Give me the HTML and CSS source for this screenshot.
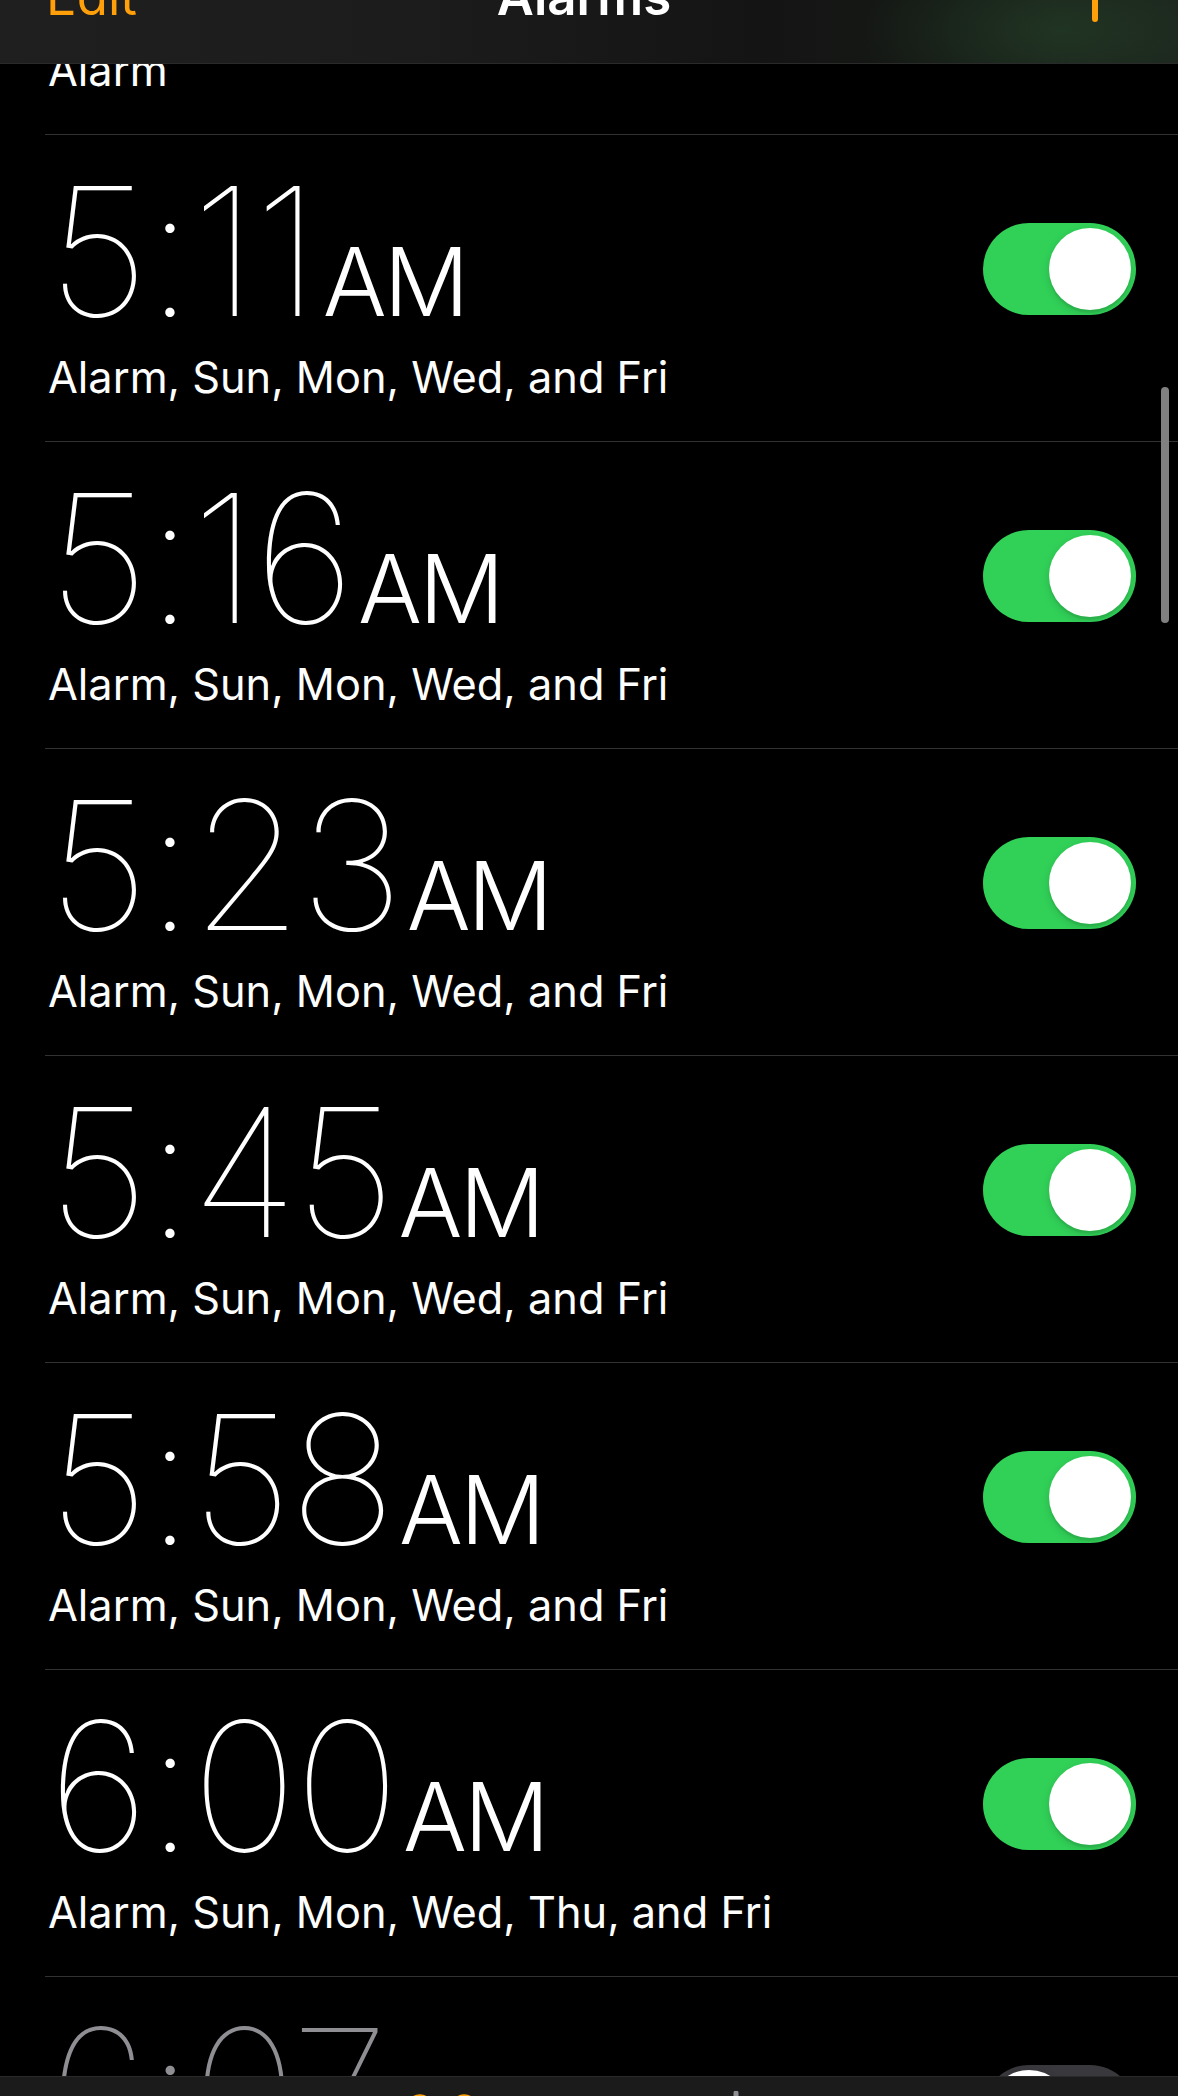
FILE: index.html
```html
<!DOCTYPE html>
<html lang="en">
<head>
<meta charset="utf-8">
<title>Alarms</title>
<link rel="stylesheet" href="styles.css">
</head>
<body>
<main class="list">
  <div class="row">
    <div class="info">
      <div class="time">4:50<span class="ampm">AM</span></div>
      <div class="sub">Alarm</div>
    </div>
    <span class="switch on"><span class="knob"></span></span>
  </div>
  <div class="row">
    <div class="info">
      <div class="time">5:11<span class="ampm">AM</span></div>
      <div class="sub">Alarm, Sun, Mon, Wed, and Fri</div>
    </div>
    <span class="switch on"><span class="knob"></span></span>
  </div>
  <div class="row">
    <div class="info">
      <div class="time">5:16<span class="ampm">AM</span></div>
      <div class="sub">Alarm, Sun, Mon, Wed, and Fri</div>
    </div>
    <span class="switch on"><span class="knob"></span></span>
  </div>
  <div class="row">
    <div class="info">
      <div class="time">5:23<span class="ampm">AM</span></div>
      <div class="sub">Alarm, Sun, Mon, Wed, and Fri</div>
    </div>
    <span class="switch on"><span class="knob"></span></span>
  </div>
  <div class="row">
    <div class="info">
      <div class="time">5:45<span class="ampm">AM</span></div>
      <div class="sub">Alarm, Sun, Mon, Wed, and Fri</div>
    </div>
    <span class="switch on"><span class="knob"></span></span>
  </div>
  <div class="row">
    <div class="info">
      <div class="time">5:58<span class="ampm">AM</span></div>
      <div class="sub">Alarm, Sun, Mon, Wed, and Fri</div>
    </div>
    <span class="switch on"><span class="knob"></span></span>
  </div>
  <div class="row">
    <div class="info">
      <div class="time">6:00<span class="ampm">AM</span></div>
      <div class="sub">Alarm, Sun, Mon, Wed, Thu, and Fri</div>
    </div>
    <span class="switch on"><span class="knob"></span></span>
  </div>
  <div class="row off">
    <div class="info">
      <div class="time">6:07<span class="ampm">AM</span></div>
      <div class="sub">Alarm</div>
    </div>
    <span class="switch"><span class="knob"></span></span>
  </div>
</main>

<div class="scrollbar"></div>

<header class="nav">
  <span class="side edit">Edit</span>
  <span class="title">Alarms</span>
  <span class="side add">
    <svg width="54" height="54" viewBox="0 0 54 54" aria-hidden="true">
      <path d="M27 3 V51 M3 27 H51" stroke="#ff9f0a" stroke-width="6" stroke-linecap="round" fill="none"/>
    </svg>
  </span>
</header>

<nav class="tabbar">
  <span class="tab globe">
    <svg width="70" height="70" viewBox="0 0 70 70" aria-hidden="true">
      <circle cx="35" cy="35" r="30" fill="none" stroke="#8e8e93" stroke-width="5"/>
    </svg>
  </span>
  <span class="tab alarm">
    <svg width="80" height="80" viewBox="0 0 80 80" aria-hidden="true">
      <path d="M4 18 A14 14 0 0 1 26 4 Z" fill="#ff9f0a"/>
      <path d="M76 18 A14 14 0 0 0 54 4 Z" fill="#ff9f0a"/>
      <circle cx="40" cy="44" r="28" fill="none" stroke="#ff9f0a" stroke-width="6"/>
    </svg>
  </span>
  <span class="tab watch">
    <svg width="70" height="80" viewBox="0 0 70 80" aria-hidden="true">
      <path d="M35 2 V12" stroke="#8e8e93" stroke-width="5" stroke-linecap="round"/>
      <circle cx="35" cy="44" r="30" fill="none" stroke="#8e8e93" stroke-width="5"/>
    </svg>
  </span>
  <span class="tab timer">
    <svg width="70" height="70" viewBox="0 0 70 70" aria-hidden="true">
      <circle cx="35" cy="35" r="30" fill="none" stroke="#8e8e93" stroke-width="5"/>
    </svg>
  </span>
</nav>
</body>
</html>
```

FILE: styles.css
```css
* { box-sizing: border-box; }

html, body {
  margin: 0;
  padding: 0;
  background: #000;
}

body {
  width: 1178px;
  height: 2096px;
  overflow: hidden;
  position: relative;
  font-family: Inter, Roboto, "Liberation Sans", sans-serif;
  color: #fff;
}

/* ---------- list ---------- */
.list {
  margin: -172px 0 0 45px;
}

.row {
  display: flex;
  justify-content: space-between;
  align-items: flex-start;
  height: 307px;
  border-bottom: 1px solid #323234;
  padding: 25px 42px 0 3px;
}

.time {
  font-size: 179px;
  line-height: 183px;
  font-weight: 100;
  letter-spacing: -3px;
  white-space: nowrap;
}

.ampm {
  font-size: 95px;
  line-height: 1;
  font-weight: 300;
  letter-spacing: -3px;
  margin-left: 6px;
}

.sub {
  font-size: 43.3px;
  line-height: 54px;
  margin-top: 7px;
  white-space: nowrap;
}

.row.off .time,
.row.off .sub {
  color: #8e8e93;
}

/* ---------- switch ---------- */
.switch {
  display: flex;
  align-items: center;
  justify-content: flex-start;
  width: 153px;
  height: 92px;
  margin-top: 63px;
  padding: 5px;
  border-radius: 46px;
  background: #39393d;
}

.switch.on {
  justify-content: flex-end;
  background: #31d158;
}

.knob {
  width: 82px;
  height: 82px;
  border-radius: 50%;
  background: #fff;
  box-shadow: 0 3px 8px rgba(0, 0, 0, 0.15), 0 3px 1px rgba(0, 0, 0, 0.06);
}

/* ---------- scroll indicator ---------- */
.scrollbar {
  position: absolute;
  left: 1161px;
  top: 387px;
  width: 8px;
  height: 236px;
  border-radius: 4px;
  background: #808080;
}

/* ---------- navigation bar ---------- */
.nav {
  position: absolute;
  top: 0;
  left: 0;
  width: 1178px;
  height: 64px;
  display: flex;
  align-items: flex-end;
  padding: 0 56px 41px 46px;
  border-bottom: 1px solid #2a2a2a;
  background:
    radial-gradient(ellipse 200px 90px at 1060px 30px, rgba(40, 72, 44, 0.55), rgba(40, 72, 44, 0) 100%),
    linear-gradient(to right, #1f1f1f 0%, #1c1c1c 35%, #141414 65%, #151915 80%, #1b221c 100%);
  font-size: 51px;
  line-height: 51px;
}

.side {
  flex: 1 1 0;
  display: flex;
}

.edit {
  color: #ff9f0a;
  justify-content: flex-start;
}

.title {
  flex: none;
  font-weight: 600;
  color: #fff;
}

.add {
  justify-content: flex-end;
}

/* ---------- tab bar ---------- */
.tabbar {
  position: absolute;
  left: 0;
  top: 2076px;
  width: 1178px;
  height: 20px;
  overflow: hidden;
  display: grid;
  grid-template-columns: repeat(4, 1fr);
  justify-items: center;
  align-items: start;
  background: #1b1b1b;
  border-top: 1px solid #2a2a2a;
}

.tab { display: flex; }
.tab.globe { padding-top: 24px; }
.tab.alarm { padding-top: 16px; }
.tab.watch { padding-top: 14px; }
.tab.timer { padding-top: 24px; }
```
